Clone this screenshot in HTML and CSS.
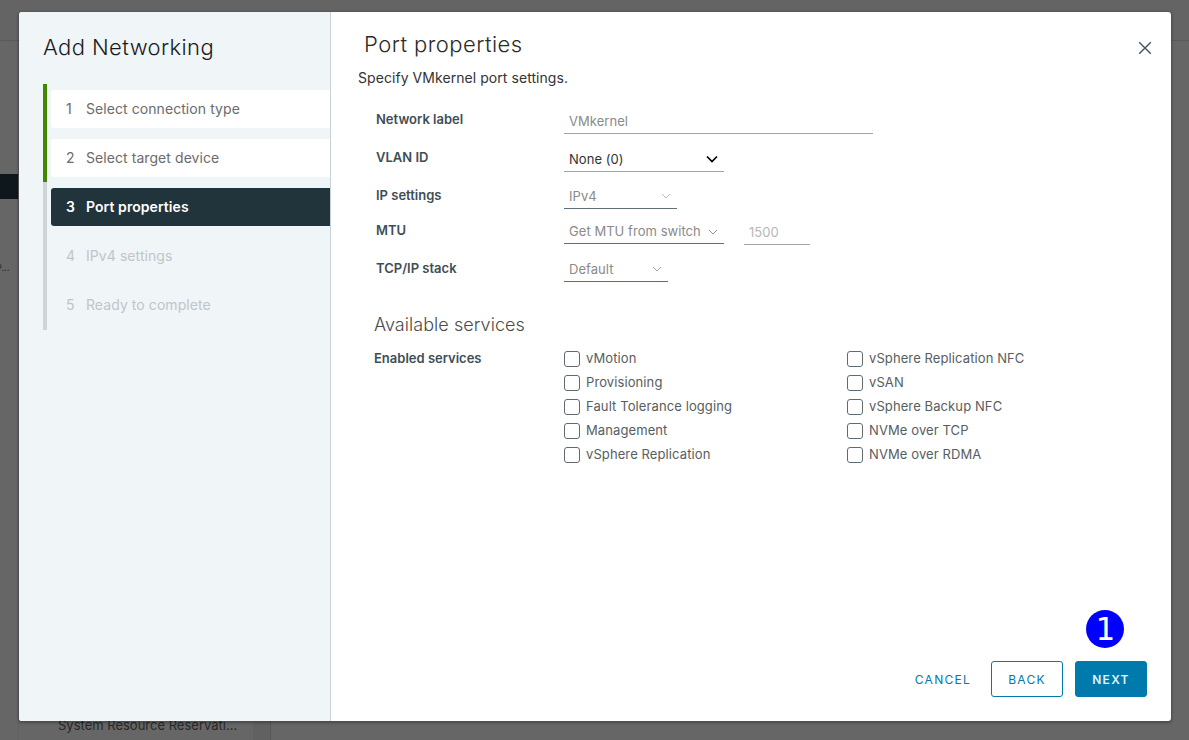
FILE: index.html
```html
<!DOCTYPE html>
<html lang="en">
<head>
<meta charset="utf-8">
<title>Add Networking</title>
<link rel="stylesheet" href="styles.css">
</head>
<body>
<div class="backdrop">
  <div class="bg-top"></div>
  <div class="bg-body">
    <div class="bg-rail">
      <div class="bg-selected"></div>
      <div class="bg-dots">P...</div>
    </div>
    <div class="bg-tree">
      <div class="bg-tree-main">
        <div class="bg-tree-item">System Resource Reservati...</div>
      </div>
      <div class="bg-scroll"></div>
    </div>
    <div class="bg-rest"></div>
  </div>
</div>

<div class="modal" role="dialog">
  <aside class="sidebar">
    <h2 class="wizard-title">Add Networking</h2>
    <ol class="steps">
      <li class="step done"><div class="step-btn"><span class="num">1</span><span>Select connection type</span></div></li>
      <li class="step done"><div class="step-btn"><span class="num">2</span><span>Select target device</span></div></li>
      <li class="step current"><div class="step-btn"><span class="num">3</span><span>Port properties</span></div></li>
      <li class="step todo"><div class="step-btn"><span class="num">4</span><span>IPv4 settings</span></div></li>
      <li class="step todo last"><div class="step-btn"><span class="num">5</span><span>Ready to complete</span></div></li>
    </ol>
  </aside>
  <main class="content">
    <header class="content-head">
      <h3 class="page-title">Port properties</h3>
      <button class="close" aria-label="Close">
        <svg width="14" height="14" viewBox="0 0 14 14"><path d="M1.2 1.2 12.8 12.8M12.8 1.2 1.2 12.8" stroke="#40555f" stroke-width="1.4" fill="none"/></svg>
      </button>
    </header>
    <p class="desc">Specify VMkernel port settings.</p>
    <div class="form">
      <div class="row row-a">
        <div class="label">Network label</div>
        <div class="field w-309 muted"><span>VMkernel</span></div>
      </div>
      <div class="row row-b">
        <div class="label">VLAN ID</div>
        <div class="field w-160 strong"><span>None (0)</span>
          <svg class="chev chev-b" width="12" height="8" viewBox="0 0 12 8"><path d="M1 1.5 6 6.5l5-5" stroke="#000" stroke-width="1.7" fill="none"/></svg>
        </div>
      </div>
      <div class="row row-c">
        <div class="label">IP settings</div>
        <div class="field w-113 dim dark-line"><span>IPv4</span>
          <svg class="chev chev-c" width="10" height="6" viewBox="0 0 10 6"><path d="M1 1l4 4 4-4" stroke="#b5bcc0" stroke-width="1" fill="none"/></svg>
        </div>
      </div>
      <div class="row row-d">
        <div class="label">MTU</div>
        <div class="field w-160 dim dark-line"><span>Get MTU from switch</span>
          <svg class="chev chev-d" width="10" height="6" viewBox="0 0 10 6"><path d="M1 1l4 4 4-4" stroke="#8f989d" stroke-width="1" fill="none"/></svg>
        </div>
        <div class="field mtu"><span>1500</span></div>
      </div>
      <div class="row row-e">
        <div class="label">TCP/IP stack</div>
        <div class="field w-104 dim dark-line"><span>Default</span>
          <svg class="chev chev-e" width="10" height="6" viewBox="0 0 10 6"><path d="M1 1l4 4 4-4" stroke="#a2aaae" stroke-width="1" fill="none"/></svg>
        </div>
      </div>
    </div>
    <h4 class="section-title">Available services</h4>
    <div class="services">
      <div class="label svc-label">Enabled services</div>
      <ul class="svc-col svc-col-1">
        <li><span class="box"></span>vMotion</li>
        <li><span class="box"></span>Provisioning</li>
        <li><span class="box"></span>Fault Tolerance logging</li>
        <li><span class="box"></span>Management</li>
        <li><span class="box"></span>vSphere Replication</li>
      </ul>
      <ul class="svc-col">
        <li><span class="box"></span>vSphere Replication NFC</li>
        <li><span class="box"></span>vSAN</li>
        <li><span class="box"></span>vSphere Backup NFC</li>
        <li><span class="box"></span>NVMe over TCP</li>
        <li><span class="box"></span>NVMe over RDMA</li>
      </ul>
    </div>
    <footer class="actions">
      <button class="btn btn-link">CANCEL</button>
      <button class="btn btn-outline">BACK</button>
      <button class="btn btn-primary">NEXT</button>
    </footer>
  </main>
  <div class="callout">1</div>
</div>
</body>
</html>
```
FILE: styles.css
```css
* { box-sizing: border-box; }
html, body { margin: 0; padding: 0; height: 100%; }
body {
  overflow: hidden;
  font-family: Inter, "Noto Sans", "Liberation Sans", sans-serif;
  background: #666;
  color: #565656;
}

/* dimmed page behind the dialog */
.backdrop { height: 740px; display: flex; flex-direction: column; background: #666; }
.bg-top { height: 41px; flex: none; background: #646464; border-bottom: 1px solid #5a5a5a; }
.bg-body { flex: 1; display: flex; min-height: 0; }
.bg-rail { width: 19px; flex: none; border-right: 1px solid #606060; overflow: hidden; }
.bg-selected { margin-top: 133px; height: 25px; background: #0d171c; }
.bg-dots { margin-top: 62px; text-indent: -4px; font-size: 9px; line-height: 14px; color: #1c2a33; white-space: nowrap; }
.bg-tree { width: 252px; flex: none; border-right: 1px solid #585858; display: flex; }
.bg-tree-main { flex: 1; min-width: 0; }
.bg-scroll { width: 17px; flex: none; background: #616161; }
.bg-tree-item { margin-top: 676px; padding-left: 39px; font-size: 13px; line-height: 16px; color: #292929; white-space: nowrap; }
.bg-rest { flex: 1; }

/* dialog */
.modal {
  position: absolute;
  left: 19px; top: 12px;
  width: 1152px; height: 709px;
  display: flex;
  background: #fff;
  border-radius: 3px;
  box-shadow: 0 1px 3px 1px rgba(0,0,0,.28);
}
.sidebar {
  width: 312px; flex: none;
  background: #f0f5f8;
  border-right: 1px solid #c8d3d9;
  border-radius: 3px 0 0 3px;
  padding: 19px 0 0 24px;
}
.wizard-title {
  margin: 0 0 21px;
  font-size: 22px; line-height: 32px; font-weight: 300;
  color: #1b1b1b;
  letter-spacing: .4px;
}
.steps { list-style: none; margin: 0; padding: 0; }
.step { padding: 6px 0 5px 4px; border-left: 4px solid #cdd5d9; }
.step.last { padding-bottom: 6px; }
.step.done { border-left-color: #438600; }
.step-btn {
  height: 38px;
  display: flex; align-items: center;
  padding: 0 0 1px 15px;
  font-size: 14px;
  letter-spacing: .07px;
  border-radius: 3px 0 0 3px;
}
.num { width: 20px; flex: none; }
.done .step-btn { background: #fff; color: #6b6b6b; }
.current .step-btn { background: #21333b; color: #fff; font-weight: 600; }
.todo .step-btn { color: #bfc5c8; }

.content { flex: 1; position: relative; padding: 0 24px 0 27px; display: flex; flex-direction: column; min-width: 0; }
.content-head { display: flex; justify-content: space-between; padding-left: 6px; height: 50px; }
.page-title { margin: 0; padding-top: 16px; font-size: 22px; line-height: 32px; font-weight: 300; color: #2a2a2a; letter-spacing: .47px; }
.close { position: absolute; right: 19px; top: 29px; padding: 0; border: 0; background: none; width: 14px; height: 14px; display: block; line-height: 0; }
.desc { margin: 6px 0 0; font-size: 14px; line-height: 20px; letter-spacing: .06px; color: #333; }

.form { margin-top: 9px; padding-left: 18px; }
.row { display: flex; align-items: flex-start; }
.row-a { height: 38px; margin-top: 11px; }
.row-b { height: 37px; }
.row-c { height: 35px; }
.row-d { height: 38px; }
.row-e { height: 38px; }
.label { width: 188px; flex: none; font-size: 13px; font-weight: 600; color: #3f4e55; line-height: 18px; padding-top: 3px; }
.row-a .label, .row-b .label { padding-top: 2px; }
.field {
  height: 26px; display: flex; align-items: center; padding-left: 5px;
  font-size: 13px; letter-spacing: .05px; border-bottom: 1px solid #a3a3a3;
  position: relative;
}
.w-309 { width: 309px; color: #8a8a8a; }
.w-160 { width: 160px; }
.w-113 { width: 113px; }
.w-104 { width: 104px; }
.strong { color: #333; }
.dim { color: #8a8a8a; }
.dark-line { border-bottom-color: #5f6f77; }
.chev { position: absolute; }
.chev-b { right: 6px; top: 9px; }
.chev-c { right: 6px; top: 10px; }
.chev-d { right: 6px; top: 11px; }
.chev-e { right: 6px; top: 10px; }
.mtu { width: 66px; margin-left: 20px; margin-top: 1px; color: #b8b8b8; }

.section-title { margin: 0 0 0 16px; padding-top: 18px; font-size: 18px; line-height: 26px; font-weight: 300; color: #4b4b4b; letter-spacing: .05px; }
.services { display: flex; margin-left: 16px; padding-top: 8px; }
.svc-label { width: 190px; padding-top: 3px; }
.svc-col { list-style: none; margin: 0; padding: 0; width: 283px; flex: none; }
.svc-col li { display: flex; align-items: center; height: 24px; font-size: 13px; letter-spacing: .1px; color: #565e62; }
.box { width: 16px; height: 16px; border: 1px solid #5f6b71; border-radius: 3px; background: #fff; margin: 2px 6px 0 0; flex: none; }

.actions { position: absolute; right: 24px; bottom: 24px; display: flex; align-items: center; gap: 12px; }
.btn {
  height: 36px; width: 72px; border-radius: 3px; padding: 0;
  font-family: inherit; font-size: 12px; letter-spacing: 1.3px; text-align: center;
  background: none; border: 1px solid transparent;
}
.btn-link { color: #0079ad; font-weight: 400; }
.btn-outline { color: #0079ad; border-color: #0079ad; font-weight: 400; background: #fff; }
.btn-primary { color: #e6f3f8; background: #0079ad; border-color: #0079ad; font-weight: 600; }

.callout {
  position: absolute; left: 1067px; top: 598px;
  width: 38px; height: 38px; border-radius: 50%;
  background: #0000ff; color: #fff;
  font-family: "DejaVu Sans Mono", monospace; font-size: 32px; line-height: 38px; text-align: center;
}
```
